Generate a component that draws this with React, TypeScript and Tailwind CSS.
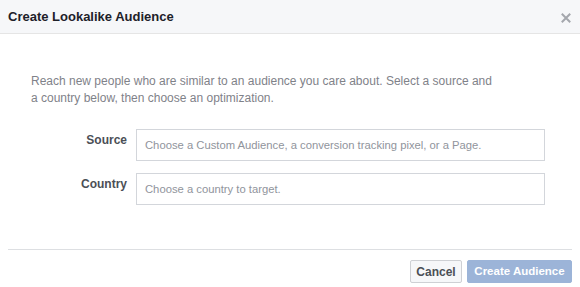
import React from "react";

export default function App() {
  return (
    <div className="w-[580px] h-[287px] bg-white overflow-hidden" style={{ fontFamily: '"Liberation Sans", Arial, sans-serif' }}>
      <div className="h-[34px] bg-[#f6f7f9] border-b border-[#e5e5e5] flex items-center justify-between pl-[8px] pr-[9px]">
        <div className="text-[13px] font-bold text-[#1d2129] leading-none">Create Lookalike Audience</div>
        <svg width="10" height="10" viewBox="0 0 10 10" className="mt-[2px]">
          <path d="M1.5 1.5 L8.5 8.5 M8.5 1.5 L1.5 8.5" stroke="#a4a7ad" strokeWidth="2" strokeLinecap="square" />
        </svg>
      </div>
      <div className="pl-[31px] pr-[20px] pt-[39px] text-[12px] leading-[17px] text-[#7f8289]">
        Reach new people who are similar to an audience you care about. Select a source and
        <br />a country below, then choose an optimization.
      </div>
      <div className="mt-[22px] flex flex-col gap-[12px]">
        <div className="flex">
          <div className="w-[127px] text-right text-[12px] font-bold text-[#4b4f56] pt-[2px]">Source</div>
          <div className="ml-[9px] w-[409px] h-[32px] border border-[#d3d6db] flex items-center pl-[8px] text-[11.25px] text-[#90949c]">
            Choose a Custom Audience, a conversion tracking pixel, or a Page.
          </div>
        </div>
        <div className="flex">
          <div className="w-[127px] text-right text-[12px] font-bold text-[#4b4f56] pt-[2px]">Country</div>
          <div className="ml-[9px] w-[409px] h-[32px] border border-[#d3d6db] flex items-center pl-[8px] text-[11.25px] text-[#90949c]">
            Choose a country to target.
          </div>
        </div>
      </div>
      <div className="mx-[8px] mt-[44px] border-t border-[#dddfe2]"></div>
      <div className="flex justify-end gap-[5px] pr-[8px] mt-[10px]">
        <button className="h-[23px] w-[52px] bg-[#f6f7f9] border border-[#ced0d4] rounded-[2px] text-[12px] font-bold text-[#4b4f56]">Cancel</button>
        <button className="h-[23px] w-[105px] bg-[#9cb4d8] border border-[#9cb4d8] rounded-[2px] text-[11.5px] font-bold text-white">Create Audience</button>
      </div>
    </div>
  );
}
